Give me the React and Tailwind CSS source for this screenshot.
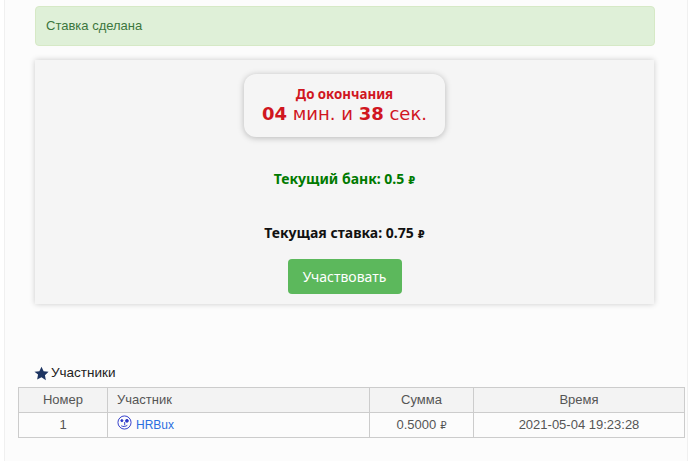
import React from 'react';

const FONT = "font-['Liberation_Sans',sans-serif]";
const BOLD = "font-['Noto_Sans',sans-serif] font-bold";

function Ruble({ className }) {
  return <span className={"font-['DejaVu_Sans',sans-serif] " + className}>₽</span>;
}

function UserIcon() {
  return (
    <svg viewBox="0 0 16 16" className="mt-[-5px] h-[15px] w-[15px] text-[#2a35c9]" fill="none" stroke="currentColor" strokeWidth="1">
      <circle cx="8" cy="8" r="7" />
      <circle cx="5.2" cy="6" r="1.1" fill="currentColor" />
      <circle cx="10.6" cy="6.2" r="1.5" fill="currentColor" />
      <path d="M8.2 7.5v3.5M4.5 11.5c2.2 1.2 4.4 1 6.5-.5" />
    </svg>
  );
}

export default function App() {
  return (
    <div className={FONT + " h-[461px] w-[691px] overflow-hidden bg-white pl-1 pr-[3px] text-[13px] text-[#333]"}>
      <div className="h-full border-x border-[#f0f0f0] bg-[#fcfcfc] pt-[6px]">
        <div className="ml-[30px] mr-[32px] flex h-[40px] items-center rounded border border-[#d6e9c6] bg-[#dff0d8] px-[10px] pb-[1px] text-[#3c763d]">
          Ставка сделана
        </div>

        <div className="ml-[30px] mr-[33px] mt-[14px] flex h-[244px] flex-col items-center bg-[#f5f5f5] pt-[14px] shadow-[0_0_6px_rgba(0,0,0,0.2)]">
          <div className="flex h-[63px] w-[201px] flex-col items-center justify-center rounded-[12px] bg-[#f5f5f5] pt-[1px] text-[#d0161f] shadow-[0_1px_6px_rgba(0,0,0,0.25)]">
            <div className={BOLD + " text-[13.3px] leading-[15px]"}>До окончания</div>
            <div className="font-['DejaVu_Sans',sans-serif] text-[18px] leading-[24px]">
              <b>04</b> мин. и <b>38</b> сек.
            </div>
          </div>
          <div className={BOLD + " mt-[32px] flex h-[20px] items-baseline gap-1 text-[14px] leading-[20px] text-[#007a00]"}>
            Текущий банк: 0.5 <Ruble className="text-[10px]" />
          </div>
          <div className={BOLD + " mt-[34px] flex h-[20px] items-baseline gap-1 text-[14px] leading-[20px] text-[#111]"}>
            Текущая ставка: 0.75 <Ruble className="text-[10px]" />
          </div>
          <button className="mt-[16px] h-[35px] w-[114px] rounded bg-[#5cb85c] font-['Noto_Sans',sans-serif] text-[14px] text-white">
            Участвовать
          </button>
        </div>

        <div className="ml-[30px] mt-[60px] flex h-[18px] items-center gap-[2px] text-[13.5px] text-[#222]">
          <svg viewBox="0 0 24 24" className="ml-[-1px] h-[15px] w-[15px] text-[#1d3461]" fill="currentColor">
            <path d="M12 1l3.4 7.3 7.9 1-5.8 5.4 1.5 7.9L12 17.8l-7 3.8 1.5-7.9L.7 9.3l7.9-1z" />
          </svg>
          Участники
        </div>

        <div className="ml-[13px] mt-[5px] w-[667px]">
          <div className="grid h-[26px] grid-cols-[89px_262px_104px_1fr] border border-[#ccc] bg-[#f3f3f3] text-[#555]">
            <div className="flex items-center justify-center border-r border-[#ccc] pb-[1px]">Номер</div>
            <div className="flex items-center border-r border-[#ccc] pb-[1px] pl-[9px]">Участник</div>
            <div className="flex items-center justify-center border-r border-[#ccc] pb-[1px]">Сумма</div>
            <div className="flex items-center justify-center pb-[1px]">Время</div>
          </div>
          <div className="grid h-[25px] grid-cols-[89px_262px_104px_1fr] border-x border-b border-[#ccc] text-[13px] text-[#555]">
            <div className="flex items-center justify-center border-r border-[#ccc]">1</div>
            <div className="flex items-center gap-[4px] border-r border-[#ccc] pl-[9px] text-[12px] text-[#2a6ee0]">
              <UserIcon />
              HRBux
            </div>
            <div className="flex items-center justify-center gap-1 border-r border-[#ccc]">
              0.5000 <Ruble className="text-[10px]" />
            </div>
            <div className="flex items-center justify-center">2021-05-04 19:23:28</div>
          </div>
        </div>
      </div>
    </div>
  );
}
